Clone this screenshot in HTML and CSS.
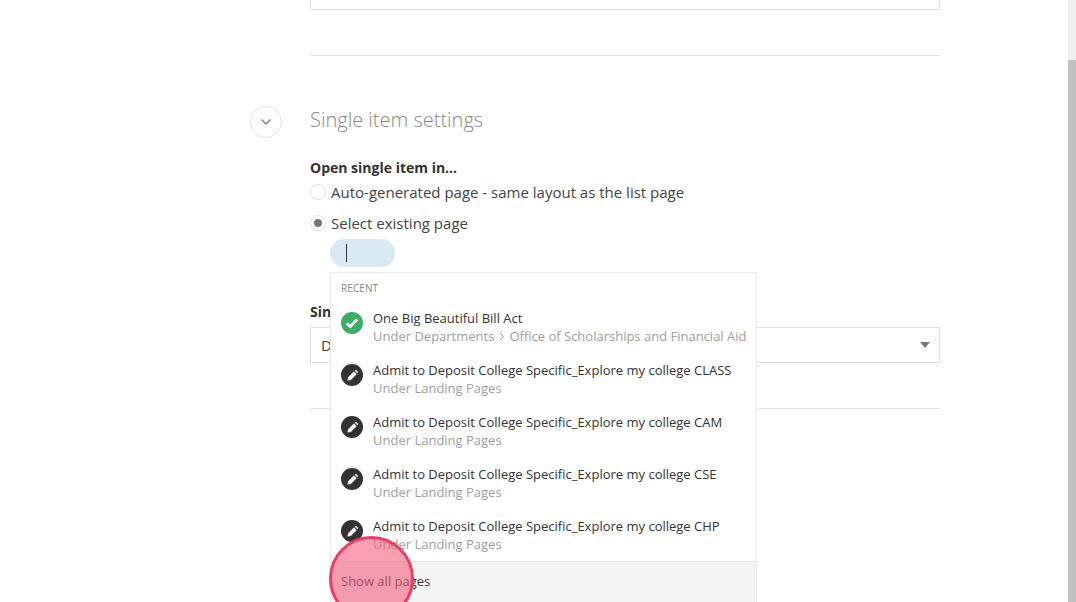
FILE: index.html
```html
<!DOCTYPE html>
<html lang="en">
<head>
<meta charset="utf-8">
<title>Single item settings</title>
<link rel="stylesheet" href="styles.css">
</head>
<body>
<div class="page">
  <main class="main">
    <div class="content">
      <div class="top-box"></div>
      <hr class="divider first">
      <section class="section">
        <div class="section-head">
          <button class="toggle" aria-label="Collapse">
            <svg width="12" height="8" viewBox="0 0 12 8"><path d="M1.500 1.500 6 6l4.500-4.500" fill="none" stroke="#777" stroke-width="1.300"/></svg>
          </button>
          <h2 class="section-title">Single item settings</h2>
        </div>
        <div class="label open-label">Open single item in...</div>
        <label class="radio-row row-a"><span class="radio"></span>Auto-generated page - same layout as the list page</label>
        <label class="radio-row row-b"><span class="radio checked"></span>Select existing page</label>
        <div class="picker">
          <div class="pill"><span class="caret"></span></div>
          <div class="dropdown">
            <div class="recent">RECENT</div>
            <div class="item">
              <span class="status ok"><svg width="14" height="12" viewBox="0 0 14 12"><path d="M1.800 6.200 5.300 9.600 12.200 2.400" fill="none" stroke="#fff" stroke-width="2.800"/></svg></span>
              <div class="item-text"><div class="item-name">One Big Beautiful Bill Act</div><div class="item-sub">Under Departments<svg class="crumb" width="6" height="9" viewBox="0 0 6 9"><path d="M1 1l3.500 3.500L1 8" fill="none" stroke="#a8a8a8" stroke-width="1"/></svg>Office of Scholarships and Financial Aid</div></div>
            </div>
            <div class="item">
              <span class="status draft"><svg width="11" height="11" viewBox="0 0 12 12"><path d="M.5 11.500 1.200 7.800 7.500 1.500 10.500 4.500 4.200 10.800ZM8.400.8 9.200.2Q9.800-.1 10.300.3L11.700 1.700Q12.100 2.200 11.800 2.800L11.200 3.600Z" fill="#fff"/></svg></span>
              <div class="item-text"><div class="item-name">Admit to Deposit College Specific_Explore my college CLASS</div><div class="item-sub">Under Landing Pages</div></div>
            </div>
            <div class="item">
              <span class="status draft"><svg width="11" height="11" viewBox="0 0 12 12"><path d="M.5 11.500 1.200 7.800 7.500 1.500 10.500 4.500 4.200 10.800ZM8.400.8 9.200.2Q9.800-.1 10.300.3L11.700 1.700Q12.100 2.200 11.800 2.800L11.200 3.600Z" fill="#fff"/></svg></span>
              <div class="item-text"><div class="item-name">Admit to Deposit College Specific_Explore my college CAM</div><div class="item-sub">Under Landing Pages</div></div>
            </div>
            <div class="item">
              <span class="status draft"><svg width="11" height="11" viewBox="0 0 12 12"><path d="M.5 11.500 1.200 7.800 7.500 1.500 10.500 4.500 4.200 10.800ZM8.400.8 9.200.2Q9.800-.1 10.300.3L11.700 1.700Q12.100 2.200 11.800 2.800L11.200 3.600Z" fill="#fff"/></svg></span>
              <div class="item-text"><div class="item-name">Admit to Deposit College Specific_Explore my college CSE</div><div class="item-sub">Under Landing Pages</div></div>
            </div>
            <div class="item">
              <span class="status draft"><svg width="11" height="11" viewBox="0 0 12 12"><path d="M.5 11.500 1.200 7.800 7.500 1.500 10.500 4.500 4.200 10.800ZM8.400.8 9.200.2Q9.800-.1 10.300.3L11.700 1.700Q12.100 2.200 11.800 2.800L11.200 3.600Z" fill="#fff"/></svg></span>
              <div class="item-text"><div class="item-name">Admit to Deposit College Specific_Explore my college CHP</div><div class="item-sub">Under Landing Pages</div></div>
            </div>
            <div class="show-all">Show all pages</div>
          </div>
        </div>
        <div class="label single-label">Single item layout</div>
        <div class="select"><span>Default</span><span class="arrow"></span></div>
      </section>
      <hr class="divider last">
    </div>
  </main>
  <div class="scrollbar"><div class="thumb"></div></div>
  <div class="click-marker"></div>
</div>
</body>
</html>
```
FILE: styles.css
```css
* { box-sizing: border-box; }
html, body { margin: 0; height: 100%; overflow: hidden; background: #fff; }
body { font-family: "Open Sans", sans-serif; color: #333; }
.page { position: relative; display: flex; height: 602px; overflow: hidden; }
.main { flex: 1; padding-left: 310px; }
.content { width: 630px; }
.top-box { height: 10px; border: 1px solid #e0e0e0; border-top: 0; }
.divider { height: 1px; margin: 0; border: 0; background: #e4e4e4; }
.divider.first { margin-top: 45px; }
.divider.last { margin-top: 45px; }
.section-head { display: flex; align-items: center; gap: 28px; margin: 48px 0 0 -60px; height: 32px; }
.toggle { width: 32px; height: 32px; margin-top: 4px; padding: 0; flex: none; display: flex; align-items: center; justify-content: center; background: #fff; border: 1px solid #e4e4e4; border-radius: 50%; }
.section-title { margin: 0; font-size: 20px; font-weight: 300; line-height: 32px; color: #888; }
.label { font-size: 14px; font-weight: 700; line-height: 20px; color: #333; }
.open-label { margin-top: 22px; }
.radio-row { display: flex; align-items: center; gap: 5px; font-size: 15px; line-height: 20px; color: #444; }
.row-a { margin-top: 4px; }
.row-b { margin-top: 11px; }
.radio { width: 16px; height: 16px; flex: none; border: 1px solid #e2e2e2; border-radius: 50%; background: #fff; display: flex; align-items: center; justify-content: center; }
.radio.checked::after { content: ""; width: 8px; height: 8px; border-radius: 50%; background: #777; }
.picker { position: relative; margin: 6px 0 0 20px; height: 28px; }
.pill { width: 65px; height: 28px; border-radius: 14px; background: #daeaf4; padding: 5px 0 0 16px; }
.caret { display: block; width: 1px; height: 18px; background: #333; }
.dropdown { position: absolute; z-index: 2; top: 33px; left: 0; width: 427px; background: #fff; border: 1px solid #ebebeb; }
.recent { height: 30px; padding: 8px 0 0 10px; font-size: 10px; line-height: 14px; letter-spacing: .1px; color: #888; }
.item { display: flex; align-items: flex-start; gap: 10px; height: 52px; padding: 6px 0 0 10px; }
.item:nth-last-child(2) { height: 50px; }
.status { width: 22px; height: 22px; margin-top: 3px; flex: none; border-radius: 50%; display: flex; align-items: center; justify-content: center; }
.status.ok { background: #3bad68; }
.status.draft { background: #333; }
.item-name { font-size: 13px; line-height: 18px; color: #333; white-space: nowrap; }
.item-sub { font-size: 13px; line-height: 18px; color: #a0a0a0; white-space: nowrap; }
.crumb { margin: 0 4px 0 5px; }
.show-all { height: 41px; padding: 0 0 2px 10px; display: flex; align-items: center; font-size: 13px; color: #333; background: #f5f5f5; border-top: 1px solid #e4e4e4; }
.single-label { margin-top: 35px; }
.select { display: flex; align-items: center; justify-content: space-between; height: 36px; margin-top: 5px; padding: 0 9px 0 10px; border: 1px solid #e0e0e0; font-size: 15px; color: #444; }
.arrow { width: 0; height: 0; border: 5.500px solid transparent; border-top: 6px solid #777; border-bottom: 0; }
.scrollbar { width: 8px; flex: none; padding-top: 60px; background: #efefef; }
.thumb { height: 100%; background: #c1c1c1; }
.click-marker { position: absolute; z-index: 3; left: 329px; top: 536px; width: 85px; height: 85px; border: 3.500px solid #ee3d64; border-radius: 50%; background: rgba(244, 96, 126, .6); }
```
